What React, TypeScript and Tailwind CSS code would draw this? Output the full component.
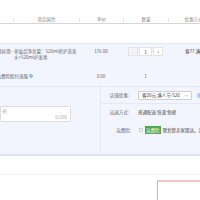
import React from "react";

export default function App() {
  return (
    <div className="w-[200px] h-[200px] overflow-hidden bg-white text-[4.5px] leading-[6px] text-[#666] font-['Noto_Sans_CJK_SC','Noto_Sans',sans-serif]">
      <div className="h-[15px]" />
      {/* header */}
      <div className="h-[9px] flex items-center border-b border-[#c9d6f7] text-[#888] whitespace-nowrap">
        <div className="w-[13px] shrink-0" />
        <div className="w-[66px] shrink-0 h-[5px] border-l border-[#e6e6e6] flex items-center justify-center">商品属性</div>
        <div className="w-[44px] shrink-0 h-[5px] border-l border-[#e6e6e6] flex items-center justify-center">单价</div>
        <div className="w-[45px] shrink-0 h-[5px] border-l border-[#e6e6e6] flex items-center justify-center">数量</div>
        <div className="w-[50px] shrink-0 h-[5px] border-l border-[#e6e6e6] flex items-center justify-center">优惠方式</div>
      </div>
      <div className="h-[19px]" />
      {/* order block */}
      <div className="bg-[#f3f5fe] border-t border-[#e3e7f3] border-b-2 border-b-[#dbe2fa]">
        {/* item row */}
        <div className="h-[22px] pt-[4px] flex items-start whitespace-nowrap">
          <div className="w-[13px] shrink-0 overflow-hidden flex justify-end">
            <span>修护柔顺丝滑–</span>
          </div>
          <div className="w-[66px] shrink-0 pl-[1px] whitespace-normal">
            化妆品净含量：520ml修护洗发水+520ml护发素
          </div>
          <div className="w-[44px] shrink-0 flex justify-center">176.00</div>
          <div className="w-[45px] shrink-0 flex justify-center -mt-[1px]">
            <div className="flex gap-[1px] h-[9px]">
              <div className="w-[10px] bg-[#f5f5f5] border border-[#e3e3e3] flex items-center justify-center text-[#ccc]">−</div>
              <div className="w-[13px] bg-white border border-[#e3e3e3] flex items-center justify-center text-[#333]">1</div>
              <div className="w-[10px] bg-white border border-[#e3e3e3] flex items-center justify-center text-[#666]">+</div>
            </div>
          </div>
          <div className="w-[50px] shrink-0 pl-[17px] text-[#333]">省77.满减</div>
        </div>
        {/* service row */}
        <div className="h-[20px] flex items-center whitespace-nowrap">
          <div className="w-[79px] shrink-0 flex">
            <div className="w-[33px] overflow-hidden flex justify-end items-center gap-[1px]">
              <span>运费险赔付退服</span>
              <span className="w-[4px] h-[4px] rounded-full bg-[#a9c6f2] border border-[#8fb2ec] shrink-0" />
            </div>
          </div>
          <div className="w-[44px] shrink-0 flex justify-center">0.00</div>
          <div className="w-[45px] shrink-0 flex justify-center">1</div>
        </div>
        {/* bottom section */}
        <div className="h-[68px] border-t border-[#e5e9f5] flex whitespace-nowrap">
          <div className="w-[100px] shrink-0 pt-[19px]">
            <div className="w-[71px] h-[16px] bg-white border border-[#dedede] rounded-[1px] flex flex-col justify-between py-[1px] pr-[3px] overflow-hidden">
              <span className="-ml-[3px] text-[#aaa]">一些</span>
              <span className="self-end text-[#aaa]">0/200</span>
            </div>
          </div>
          <div className="flex-1 border-l border-[#e5e9f5]">
            <div className="h-[17px] border-b border-[#e5e9f5] flex items-center">
              <div className="w-[28px] text-right">店铺优惠:</div>
              <div className="ml-[9px] w-[54px] h-[9px] bg-white border border-[#cfcfcf] rounded-[1px] px-[3px] flex items-center justify-between text-[#333]">
                <span>省20元:满人节-520</span>
                <svg width="4" height="3" viewBox="0 0 4 3" className="shrink-0">
                  <path d="M0.3 0.5 L2 2.3 L3.7 0.5" fill="none" stroke="#999" strokeWidth="0.5" />
                </svg>
              </div>
              <span className="ml-[5px] text-[#4a8af4]">优惠</span>
            </div>
            <div className="h-[16px] flex items-center">
              <div className="w-[28px] text-right">运送方式:</div>
              <div className="ml-[9px] text-[#444]">普通配送 快递 免邮</div>
            </div>
            <div className="h-[19px] flex items-center">
              <div className="w-[30px] text-right">运费险:</div>
              <div className="ml-[8px] w-[4px] h-[4px] bg-white border border-[#d0d0d0] flex items-center justify-center">
                <svg width="3" height="3" viewBox="0 0 3 3">
                  <path d="M0.4 1.5 L1.2 2.3 L2.6 0.6" fill="none" stroke="#bbb" strokeWidth="0.5" />
                </svg>
              </div>
              <div className="ml-[2px] h-[8px] px-[1px] bg-[#4fa84f] text-white flex items-center">运费险</div>
              <div className="ml-[2px] text-[#555]">聚划算卖家赠送，若确认收货前退货</div>
            </div>
          </div>
        </div>
      </div>
      <div className="h-[19px] border-b border-[#f2f2f2]" />
      <div className="h-[5px]" />
      <div className="ml-[157px] h-[40px] border-l border-t-2 border-l-[#f2a3a3] border-t-[#f8c3c3] bg-white" />
    </div>
  );
}
